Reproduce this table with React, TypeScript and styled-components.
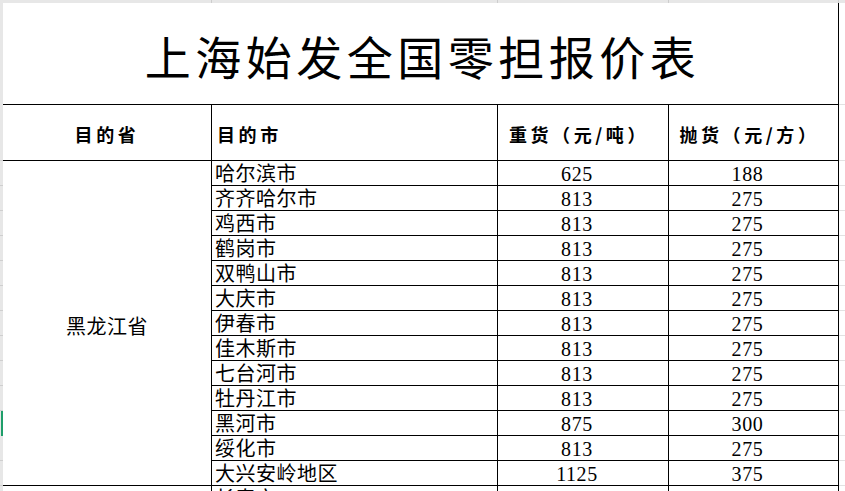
import React from "react";
import styled, { createGlobalStyle, css } from "styled-components";

const Global = createGlobalStyle`
  html, body { margin: 0; padding: 0; background: #fff; overflow: hidden; }
  body { width: 845px; height: 491px; }
`;

const CJK = `"Noto Sans CJK SC", "Noto Sans", sans-serif`;
const NUM = `"Liberation Serif", "Noto Sans CJK SC", serif`;

const Sheet = styled.div`
  display: grid;
  grid-template-columns: 3px 209px 286px 171px 170px 6px;
  grid-template-rows: 3px 102px 56px repeat(13, 25px) 25px;
  font-family: ${CJK};
  color: #000;
  box-sizing: border-box;
  & > * { box-sizing: border-box; }
`;

const TopCell = styled.div<{ $tick?: boolean }>`
  background: #e7e7e7;
  border-right: ${(p) => (p.$tick ? "1px solid #cdcdcd" : "none")};
`;

const Gutter = styled.div<{ $active?: boolean; $tick?: boolean }>`
  background: #e7e7e7;
  border-bottom: ${(p) => (p.$tick ? "1px solid #cfcfcf" : "none")};
  ${(p) =>
    p.$active &&
    css`
      background: #1f9e6a;
      border-left: 1px solid #e7e7e7;
      border-bottom: none;
    `}
`;

const Margin = styled.div`
  border-bottom: 1px solid #e2e2e2;
`;

const TitleCell = styled.div`
  grid-column: span 4;
  border-right: 1px solid #000;
  border-bottom: 1px solid #000;
  display: flex;
  align-items: center;
  justify-content: center;
  padding: 2px 0 0 4px;
  font-size: 46px;
  letter-spacing: 4.5px;
  font-weight: 400;
  line-height: 1;
`;

const HeadCell = styled.div<{ $align?: "left" | "center"; $shift?: number }>`
  border-right: 1px solid #000;
  border-bottom: 1px solid #000;
  display: flex;
  align-items: center;
  justify-content: ${(p) => (p.$align === "left" ? "flex-start" : "center")};
  padding: 2px ${(p) => p.$shift ?? 0}px 0 ${(p) => (p.$align === "left" ? 5 : 0)}px;
  font-size: 18px;
  font-weight: 700;
  letter-spacing: 3.6px;
  white-space: nowrap;
`;

const ProvinceCell = styled.div<{ $span: number }>`
  grid-row: span ${(p) => p.$span};
  border-right: 1px solid #000;
  border-bottom: 1px solid #000;
  display: flex;
  align-items: center;
  justify-content: center;
  padding-top: 4px;
  font-size: 20px;
  letter-spacing: 0.5px;
`;

const CityCell = styled.div`
  border-right: 1px solid #000;
  border-bottom: 1px solid #000;
  padding: 0 0 0 3px;
  font-size: 20px;
  letter-spacing: 0.5px;
  line-height: 24px;
  white-space: nowrap;
`;

const NumCell = styled.div`
  border-right: 1px solid #000;
  border-bottom: 1px solid #000;
  font-family: ${NUM};
  font-size: 20px;
  letter-spacing: 0.6px;
  line-height: 23px;
  padding: 2px 12px 0 0;
  text-align: center;
`;

type Row = { city: string; heavy: string; light: string };

const rows: Row[] = [
  { city: "哈尔滨市", heavy: "625", light: "188" },
  { city: "齐齐哈尔市", heavy: "813", light: "275" },
  { city: "鸡西市", heavy: "813", light: "275" },
  { city: "鹤岗市", heavy: "813", light: "275" },
  { city: "双鸭山市", heavy: "813", light: "275" },
  { city: "大庆市", heavy: "813", light: "275" },
  { city: "伊春市", heavy: "813", light: "275" },
  { city: "佳木斯市", heavy: "813", light: "275" },
  { city: "七台河市", heavy: "813", light: "275" },
  { city: "牡丹江市", heavy: "813", light: "275" },
  { city: "黑河市", heavy: "875", light: "300" },
  { city: "绥化市", heavy: "813", light: "275" },
  { city: "大兴安岭地区", heavy: "1125", light: "375" },
];

export default function App() {
  return (
    <>
      <Global />
      <Sheet>
        <TopCell />
        <TopCell $tick />
        <TopCell $tick />
        <TopCell $tick />
        <TopCell $tick />
        <TopCell />

        <Gutter />
        <TitleCell>上海始发全国零担报价表</TitleCell>
        <Margin />

        <Gutter $tick />
        <HeadCell>目的省</HeadCell>
        <HeadCell $align="left">目的市</HeadCell>
        <HeadCell $shift={8}>重货（元/吨）</HeadCell>
        <HeadCell $shift={8}>抛货（元/方）</HeadCell>
        <Margin />

        {rows.map((r, i) => (
          <React.Fragment key={r.city}>
            <Gutter $tick $active={i === 10} />
            {i === 0 && <ProvinceCell $span={rows.length}>黑龙江省</ProvinceCell>}
            <CityCell>{r.city}</CityCell>
            <NumCell>{r.heavy}</NumCell>
            <NumCell>{r.light}</NumCell>
            <Margin />
          </React.Fragment>
        ))}

        <Gutter $tick />
        <ProvinceCell $span={1}>吉林省</ProvinceCell>
        <CityCell>长春市</CityCell>
        <NumCell>813</NumCell>
        <NumCell>275</NumCell>
        <Margin />
      </Sheet>
    </>
  );
}
